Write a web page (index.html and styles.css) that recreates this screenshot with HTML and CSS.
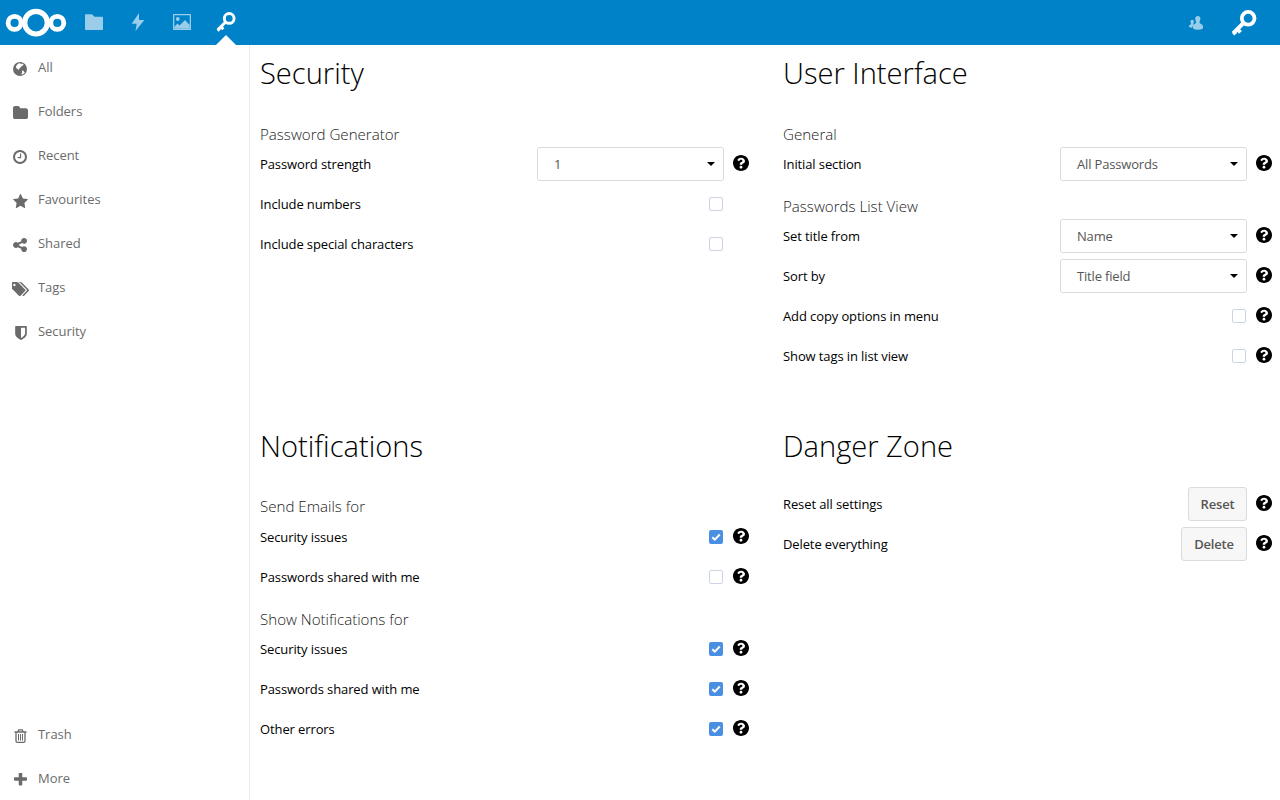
FILE: index.html
```html
<!DOCTYPE html>
<html lang="en">
<head>
<meta charset="utf-8">
<title>Passwords</title>
<link rel="stylesheet" href="styles.css">
</head>
<body>
<svg class="defs" width="0" height="0">
  <symbol id="help" viewBox="8 8 496 496"><path d="M504 256c0 136.997-111.043 248-248 248S8 392.997 8 256C8 119.083 119.043 8 256 8s248 111.083 248 248zM262.655 90c-54.497 0-89.255 22.957-116.549 63.758-3.536 5.286-2.353 12.415 2.715 16.258l34.699 26.31c5.205 3.947 12.621 3.008 16.665-2.122 17.864-22.658 30.113-35.797 57.303-35.797 20.429 0 45.698 13.148 45.698 32.958 0 14.976-12.363 22.667-32.534 33.976C247.128 238.528 216 254.941 216 296v4c0 6.627 5.373 12 12 12h56c6.627 0 12-5.373 12-12v-1.333c0-28.462 83.186-29.647 83.186-106.667 0-58.002-60.165-102-116.531-102zM256 338c-25.365 0-46 20.635-46 46 0 25.364 20.635 46 46 46s46-20.636 46-46c0-25.365-20.635-46-46-46z"/></symbol>
  <symbol id="key" viewBox="0 0 20 20"><circle cx="13.2" cy="6.400" r="4.900" fill="none" stroke="#fff" stroke-width="2.900"/><path d="M9.600 10 1.600 18M4.800 14.600l2.500 2.600M2.100 17l1.500 1.700" fill="none" stroke="#fff" stroke-width="3"/></symbol>
</svg>
<header class="topbar">
  <svg class="logo" width="62" height="30" viewBox="0 0 62 30" fill="none" stroke="#fff"><circle cx="31" cy="14.700" r="11.300" stroke-width="5.200"/><circle cx="9.600" cy="14.900" r="6.500" stroke-width="4.800"/><circle cx="52.300" cy="14.900" r="6.500" stroke-width="4.800"/></svg>
  <nav class="apps">
    <a class="app"><svg width="18" height="16" viewBox="0 0 18 16"><path d="M.7.3H7l2.500 2.500h7.800q.7 0 .7.7v11.800q0 .7-.7.7H.7q-.7 0-.7-.7V1Q0 .3.7.3z"/></svg></a>
    <a class="app"><svg width="14" height="18" viewBox="0 0 14 18"><path d="M8 0 .7 10.800h5L4.500 18 13.300 7H8z"/></svg></a>
    <a class="app"><svg width="18" height="16" viewBox="0 0 18 16"><path fill-rule="evenodd" d="M.6 0h16.800q.6 0 .6.6v14.800q0 .6-.6.6H.6q-.6 0-.6-.6V.6Q0 0 .6 0zM1.300 1.300v13.400h15.400V1.300z"/><circle cx="4.800" cy="5" r="1.900"/><path d="M1.300 14.700v-2L4.500 9.500l2 2L12 6l4.700 5v3.700z"/></svg></a>
    <a class="app current"><svg width="20" height="20"><use href="#key"/></svg></a>
  </nav>
  <div class="account">
    <svg width="14" height="14" viewBox="0 0 14 14"><path d="M8.800 0c1.600 0 2.600 1.100 2.600 2.800 0 1.200-.4 2.100-.8 2.900v1.400c.7.9 3.400 1.300 3.400 3.400v2q-2 1.300-5.200 1.300T4 12.600v-2.100c0-2.100 2.300-2.500 3-3.400V5.700c-.4-.8-.8-1.700-.8-2.900C6.200 1.100 7.200 0 8.800 0zM3.200 3.800c1 0 1.700.7 1.700 1.800 0 .8-.2 1.300-.5 1.800v1L5.200 9Q3.200 9.600 3.200 11.800q-2 0-3.200-.7V10c0-1.200 1.600-1.200 2-1.800v-.8c-.3-.5-.5-1-.5-1.800 0-1.100.7-1.800 1.700-1.800z"/></svg>
    <svg class="avatar" width="26" height="26"><use href="#key"/></svg>
  </div>
</header>
<div class="body">
  <aside class="sidebar">
    <ul>
      <li><svg width="14" height="14" viewBox="0 0 14 14"><circle cx="7" cy="7" r="7"/><path fill="#fff" d="M5.200 1.400 7.300 1.300l.9.900 1.200-.6 1.300.9-1.500 1.600-1.500.8-.6 1.300-1.300.5.200 1.200-1.300-.6L3.200 6l-.3-1.500 1-1.500z"/><path fill="#fff" d="m8.800 8.600 1.500.2.900 1.100.7.200-1 1.400-1.600.9-1-.2.900-1.700z"/></svg>All</li>
      <li><svg class="folder" width="15" height="13" viewBox="64 128 1664 1408" preserveAspectRatio="none"><path d="M1728 608v704q0 92-66 158t-158 66h-1216q-92 0-158-66t-66-158v-960q0-92 66-158t158-66h320q92 0 158 66t66 158v32h672q92 0 158 66t66 158z"/></svg>Folders</li>
      <li><svg width="14" height="14" viewBox="128 128 1536 1536"><path d="M1024 544v448q0 14-9 23t-23 9h-320q-14 0-23-9t-9-23v-64q0-14 9-23t23-9h224v-352q0-14 9-23t23-9h64q14 0 23 9t9 23zm416 352q0-148-73-273t-198-198-273-73-273 73-198 198-73 273 73 273 198 198 273 73 273-73 198-198 73-273zm224 0q0 209-103 385.500t-279.500 279.500-385.500 103-385.500-103-279.500-279.500-103-385.500 103-385.500 279.500-279.500 385.500-103 385.500 103 279.500 279.500 103 385.500z"/></svg>Recent</li>
      <li><svg width="15" height="14" viewBox="64 32 1664 1587"><path d="M1728 647q0 22-26 48l-363 354 86 500q1 7 1 20 0 21-10.500 35.500t-30.500 14.500q-19 0-40-12l-449-236-449 236q-22 12-40 12-21 0-31.500-14.500t-10.500-35.500q0-6 2-20l86-500-364-354q-25-27-25-48 0-37 56-46l502-73 225-455q19-41 49-41t49 41l225 455 502 73q56 9 56 46z"/></svg>Favourites</li>
      <li><svg width="14" height="14" viewBox="128 128 1536 1536"><path d="M1344 1024q133 0 226.500 93.500t93.500 226.500-93.500 226.500-226.500 93.500-226.500-93.500-93.500-226.500q0-12 2-34l-360-180q-92 86-218 86-133 0-226.500-93.500t-93.500-226.500 93.500-226.500 226.500-93.500q126 0 218 86l360-180q-2-22-2-34 0-133 93.500-226.500t226.500-93.500 226.500 93.500 93.500 226.500-93.500 226.500-226.500 93.500q-126 0-218-86l-360 180q2 22 2 34t-2 34l360 180q92-86 218-86z"/></svg>Shared</li>
      <li><svg class="tags" width="17" height="14" viewBox="0 128 1835 1515"><path d="M384 448q0-53-37.500-90.500t-90.500-37.500-90.500 37.500-37.500 90.500 37.500 90.500 90.500 37.500 90.500-37.500 37.500-90.500zm1067 576q0 53-37 90l-491 492q-39 37-91 37-53 0-90-37l-715-716q-38-37-64.500-101t-26.500-117v-416q0-52 38-90t90-38h416q53 0 117 26.500t102 64.500l715 714q37 39 37 91zm384 0q0 53-37 90l-491 492q-39 37-91 37-36 0-59-14t-53-45l470-470q37-37 37-90 0-52-37-91l-715-714q-38-38-102-64.500t-117-26.500h224q53 0 117 26.500t102 64.500l715 714q37 39 37 91z"/></svg>Tags</li>
      <li><svg class="shield" width="12" height="14" viewBox="256 128 1280 1536"><path d="M1344 960v-640h-448v1137q119-63 213-137 235-184 235-360zm192-768v768q0 86-33.500 170.500t-83 150-118 127.500-126.500 103-121 77.500-89.500 49.500-42.500 20q-12 6-26 6t-26-6q-16-7-42.500-20t-89.500-49.500-121-77.500-126.500-103-118-127.500-83-150-33.500-170.500v-768q0-26 19-45t45-19h1152q26 0 45 19t19 45z"/></svg>Security</li>
    </ul>
    <ul>
      <li><svg class="trash" width="13" height="14" viewBox="0 0 13 14"><g fill="none" stroke="#6b6b6b"><path d="M.5 3h12M4 2.800l.7-1.900h3.600L9 2.800M2 3.500v8.500q0 1.300 1.300 1.300h6.400q1.300 0 1.300-1.300V3.500" stroke-width="1.300"/><path d="M4.500 5v6.500M6.500 5v6.500M8.500 5v6.500"/></g></svg>Trash</li>
      <li><svg class="plus" width="13" height="13" viewBox="192 192 1408 1408"><path d="M1600 736v192q0 40-28 68t-68 28h-416v416q0 40-28 68t-68 28h-192q-40 0-68-28t-28-68v-416h-416q-40 0-68-28t-28-68v-192q0-40 28-68t68-28h416v-416q0-40 28-68t68-28h192q40 0 68 28t28 68v416h416q40 0 68 28t28 68z"/></svg>More</li>
    </ul>
  </aside>
  <main class="settings">
    <section>
      <h1>Security</h1>
      <h3>Password Generator</h3>
      <div class="row"><label>Password strength</label><div class="select">1</div><svg class="help"><use href="#help"/></svg></div>
      <div class="row"><label>Include numbers</label><span class="check"></span></div>
      <div class="row"><label>Include special characters</label><span class="check"></span></div>
    </section>
    <section>
      <h1>User Interface</h1>
      <h3>General</h3>
      <div class="row"><label>Initial section</label><div class="select">All Passwords</div><svg class="help"><use href="#help"/></svg></div>
      <h3>Passwords List View</h3>
      <div class="row"><label>Set title from</label><div class="select">Name</div><svg class="help"><use href="#help"/></svg></div>
      <div class="row"><label>Sort by</label><div class="select">Title field</div><svg class="help"><use href="#help"/></svg></div>
      <div class="row"><label>Add copy options in menu</label><span class="check"></span><svg class="help"><use href="#help"/></svg></div>
      <div class="row"><label>Show tags in list view</label><span class="check"></span><svg class="help"><use href="#help"/></svg></div>
    </section>
    <section class="notifications">
      <h1>Notifications</h1>
      <h3>Send Emails for</h3>
      <div class="row"><label>Security issues</label><span class="check on"><svg viewBox="0 0 14 14"><path d="M3.300 7.300 5.800 9.700 10.800 4.500"/></svg></span><svg class="help"><use href="#help"/></svg></div>
      <div class="row"><label>Passwords shared with me</label><span class="check"></span><svg class="help"><use href="#help"/></svg></div>
      <h3>Show Notifications for</h3>
      <div class="row"><label>Security issues</label><span class="check on"><svg viewBox="0 0 14 14"><path d="M3.300 7.300 5.800 9.700 10.800 4.500"/></svg></span><svg class="help"><use href="#help"/></svg></div>
      <div class="row"><label>Passwords shared with me</label><span class="check on"><svg viewBox="0 0 14 14"><path d="M3.300 7.300 5.800 9.700 10.800 4.500"/></svg></span><svg class="help"><use href="#help"/></svg></div>
      <div class="row"><label>Other errors</label><span class="check on"><svg viewBox="0 0 14 14"><path d="M3.300 7.300 5.800 9.700 10.800 4.500"/></svg></span><svg class="help"><use href="#help"/></svg></div>
    </section>
    <section class="danger">
      <h1>Danger Zone</h1>
      <div class="row"><label>Reset all settings</label><button class="reset">Reset</button><svg class="help"><use href="#help"/></svg></div>
      <div class="row"><label>Delete everything</label><button class="delete">Delete</button><svg class="help"><use href="#help"/></svg></div>
    </section>
  </main>
</div>
</body>
</html>
```
FILE: styles.css
```css
* { box-sizing: border-box; }
body {
  margin: 0;
  height: 800px;
  overflow: hidden;
  display: flex;
  flex-direction: column;
  background: #fff;
  color: #000;
  font: 13px/20px "Open Sans", sans-serif;
}
svg { display: block; flex: none; }
.defs { position: absolute; }

.topbar {
  flex: none;
  height: 45px;
  background: #0082c9;
  display: flex;
  align-items: center;
  padding: 0 23px 0 5px;
}
.apps { display: flex; margin-left: 5px; height: 45px; }
.app {
  position: relative;
  width: 44px;
  display: flex;
  align-items: center;
  justify-content: center;
}
.app svg { fill: #99cde9; margin-bottom: 1px; }
.current::after {
  content: "";
  position: absolute;
  left: 12px;
  bottom: 0;
  border: 10px solid transparent;
  border-top: 0;
  border-bottom-color: #fff;
}
.account {
  margin-left: auto;
  display: flex;
  align-items: center;
  gap: 28px;
  fill: #99cde9;
}

.body { flex: 1; display: flex; min-height: 0; }
.sidebar {
  flex: none;
  width: 250px;
  border-right: 1px solid #ebebeb;
  display: flex;
  flex-direction: column;
  justify-content: space-between;
}
.sidebar ul { list-style: none; margin: 0; padding: 0; }
.sidebar li {
  height: 44px;
  padding: 0 0 0 13px;
  display: grid;
  grid-template-columns: 25px 1fr;
  align-items: center;
  color: #6b6b6b;
  letter-spacing: -0.04px;
}
.sidebar svg { fill: #6b6b6b; margin-top: 4px; }
.sidebar .tags { margin-left: -1px; }
.sidebar .shield { margin-left: 2px; }
.sidebar .trash, .sidebar .plus { margin-left: 1px; }
.sidebar .folder, .sidebar .plus { margin-top: 3px; }

.settings {
  flex: 1;
  display: grid;
  grid-template-columns: 489px 489px;
  grid-template-rows: 373px 1fr;
  column-gap: 34px;
  padding-left: 10px;
}
h1 {
  margin: 8px 0 0;
  font-size: 29.1px;
  line-height: 40px;
  font-weight: 300;
}
h3 {
  margin: 12px 0 0;
  font-size: 15.1px;
  line-height: 20px;
  font-weight: 300;
  color: #222;
}
h1 + h3 { margin-top: 31px; }
.notifications h1 + h3 { margin: 30px 0 1px; }
.danger h1 { margin-bottom: 18px; }
.row { height: 40px; display: flex; align-items: center; padding-right: 25px; }
.row label { flex: 1; letter-spacing: -0.11px; }
.help { width: 16px; height: 16px; margin: 0 -25px 2px 9px; }
.check {
  width: 14px;
  height: 14px;
  margin-right: 1px;
  border: 1px solid #ccd3e6;
  border-radius: 2px;
}
.on { background: #4a90e2; border: 0; }
.on path { fill: none; stroke: #fff; stroke-width: 2; }
.select {
  width: 187px;
  height: 34px;
  border: 1px solid #dbdbdb;
  border-radius: 3px;
  padding: 0 8px 0 16px;
  display: flex;
  align-items: center;
  justify-content: space-between;
  color: #555;
  letter-spacing: -0.17px;
}
.select::after {
  content: "";
  border: 4px solid transparent;
  border-top-color: #000;
  border-bottom: 0;
}
button {
  height: 34px;
  padding: 0;
  border: 1px solid #dbdbdb;
  border-radius: 3px;
  background: #f7f7f7;
  color: #555;
  font: 600 13px "Open Sans", sans-serif;
  letter-spacing: -0.2px;
}
.reset { width: 59px; }
.delete { width: 66px; }
```
